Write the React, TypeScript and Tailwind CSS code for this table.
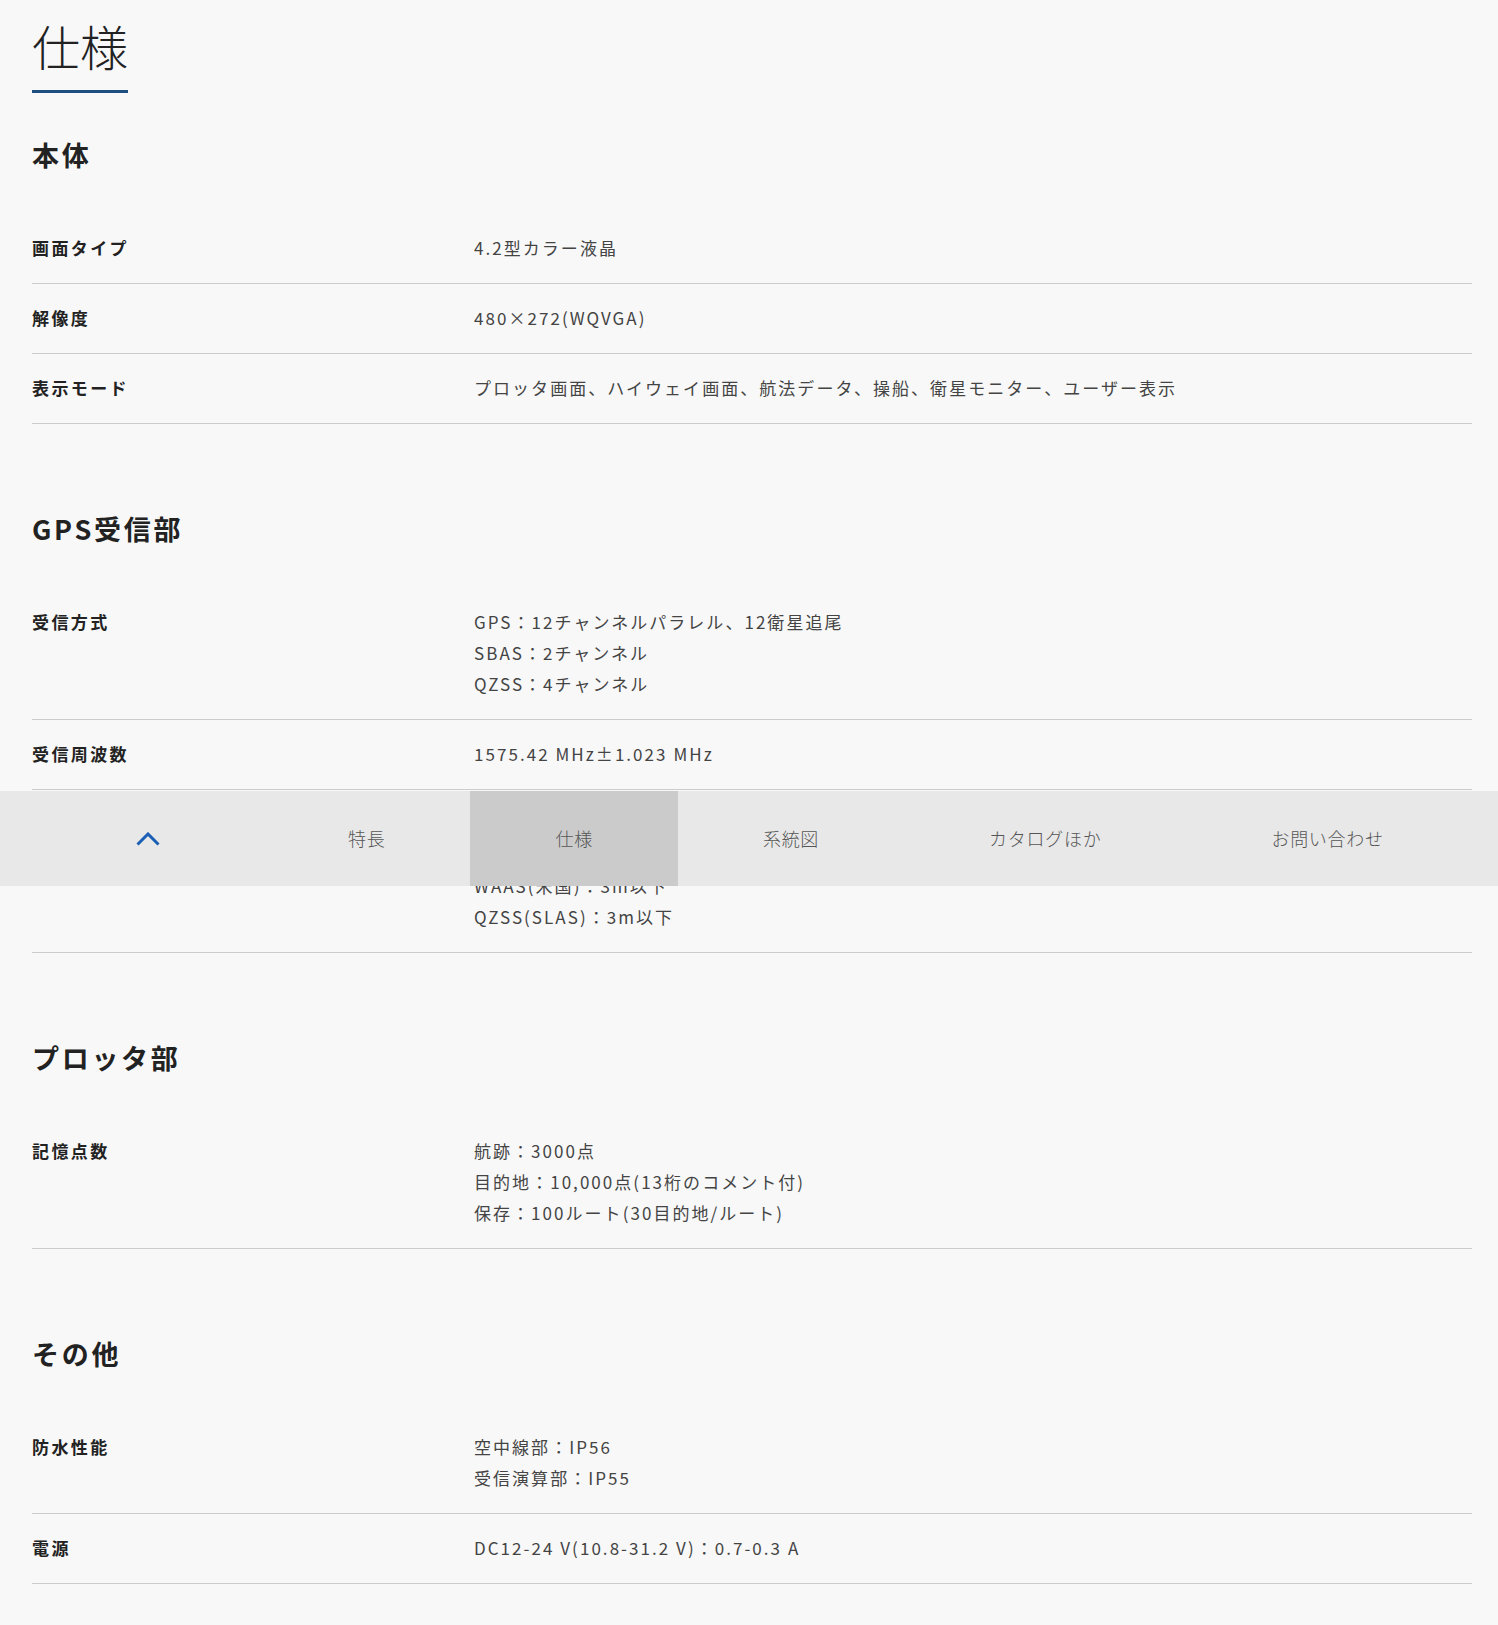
import { ReactNode } from 'react';

type Spec = { label: string; values: string[] };
type Section = { title: string; rows: Spec[] };

const sections: Section[] = [
  {
    title: '本体',
    rows: [
      { label: '画面タイプ', values: ['4.2型カラー液晶'] },
      { label: '解像度', values: ['480×272(WQVGA)'] },
      {
        label: '表示モード',
        values: ['プロッタ画面、ハイウェイ画面、航法データ、操船、衛星モニター、ユーザー表示'],
      },
    ],
  },
  {
    title: 'GPS受信部',
    rows: [
      {
        label: '受信方式',
        values: ['GPS：12チャンネルパラレル、12衛星追尾', 'SBAS：2チャンネル', 'QZSS：4チャンネル'],
      },
      { label: '受信周波数', values: ['1575.42 MHz±1.023 MHz'] },
      {
        label: '測位精度',
        values: ['GPS：10m以下', 'MSAS：7m以下', 'WAAS(米国)：3m以下', 'QZSS(SLAS)：3m以下'],
      },
    ],
  },
  {
    title: 'プロッタ部',
    rows: [
      {
        label: '記憶点数',
        values: ['航跡：3000点', '目的地：10,000点(13桁のコメント付)', '保存：100ルート(30目的地/ルート)'],
      },
    ],
  },
  {
    title: 'その他',
    rows: [
      { label: '防水性能', values: ['空中線部：IP56', '受信演算部：IP55'] },
      { label: '電源', values: ['DC12-24 V(10.8-31.2 V)：0.7-0.3 A'] },
    ],
  },
];

const navItems = ['特長', '仕様', '系統図', 'カタログほか', 'お問い合わせ'];

const SpecRow = ({ row }: { row: Spec }) => (
  <div className="grid grid-cols-[442px_1fr] pt-[18px] pb-[20px] border-b border-[#cccccc] text-[17px] leading-[31px]">
    <div className="font-bold tracking-[0.14em] text-[#222222]">{row.label}</div>
    <div className="tracking-[0.12em] text-[#444444]">
      {row.values.map((v) => (
        <p key={v}>{v}</p>
      ))}
    </div>
  </div>
);

const SpecSection = ({ section, first }: { section: Section; first?: boolean }): ReactNode => (
  <section className={first ? 'mt-[42px]' : 'mt-[85px]'}>
    <h2 className="mb-[39px] text-[27px] leading-[40px] font-bold tracking-[0.1em] text-[#222222]">
      {section.title}
    </h2>
    {section.rows.map((row) => (
      <SpecRow key={row.label} row={row} />
    ))}
  </section>
);

const App = () => {
  return (
    <div className="relative min-h-screen bg-[#f8f8f8] font-['Noto_Sans_CJK_JP','Noto_Sans',sans-serif]">
      <div className="pl-[32px] pr-[26px] pt-[9px] pb-[43px]">
        <h1 className="w-fit pb-[9px] border-b-[3px] border-[#1d4f80] text-[48px] leading-[72px] font-light text-[#222222]">
          仕様
        </h1>

        {sections.map((s, i) => (
          <SpecSection key={s.title} section={s} first={i === 0} />
        ))}
      </div>

      <nav className="absolute top-[791px] left-0 right-0 h-[95px] flex bg-[#e8e8e8] text-[18px] tracking-[0.04em] text-[#555555]">
        <button className="w-[263px] pl-[32px] flex items-center justify-center">
          <svg width="24" height="14" viewBox="0 0 24 14" fill="none">
            <path d="M1.5 12.5L12 2l10.5 10.5" stroke="#1a5fb4" strokeWidth="3" />
          </svg>
        </button>
        {navItems.map((item) => (
          <a
            key={item}
            className={
              'px-[85px] flex items-center font-light ' + (item === '仕様' ? 'bg-[#cbcbcb]' : '')
            }
          >
            {item}
          </a>
        ))}
      </nav>
    </div>
  );
};

export default App;
